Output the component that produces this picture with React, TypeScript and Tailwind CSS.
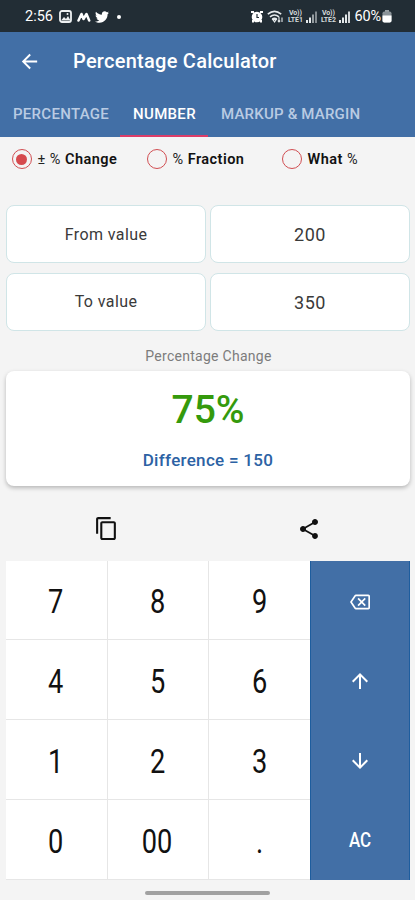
import React from "react";
import {
  MdArrowBack,
  MdArrowDownward,
  MdArrowUpward,
  MdContentCopy,
  MdOutlineBackspace,
  MdShare,
} from "react-icons/md";
import { FaTwitter } from "react-icons/fa";

function Signal({ strong = false }: { strong?: boolean }) {
  return (
    <svg width="12" height="12" viewBox="0 0 12 12" fill="#e4e8ea">
      <rect x="0" y="9" width="2" height="3" />
      <rect x="3" y="6.5" width="2" height="5.5" />
      <rect x="6" y="3.5" width="2" height="8.5" opacity={strong ? 1 : 0.6} />
      <rect x="9" y="0.5" width="2" height="11.5" opacity={strong ? 0.9 : 0.5} />
    </svg>
  );
}

function Volte({ sim }: { sim: number }) {
  return (
    <span className="flex w-[16px] flex-col items-center text-[7px] font-bold leading-[6.5px] tracking-[-0.1px] text-[#d5dadc]">
      <span>Vo))</span>
      <span>LTE{sim}</span>
    </span>
  );
}

function StatusBar() {
  return (
    <div className="flex h-8 shrink-0 items-center bg-[#222d35] pl-[25px] pr-[23px] pt-px text-white">
      <span className="w-[34px] text-[14.5px] leading-8">2:56</span>
      <svg width="13" height="13" viewBox="0 0 13 13">
        <rect x="1" y="1" width="11" height="11" rx="2" fill="none" stroke="#eef1f2" strokeWidth="1.8" />
        <path d="M2 10.5 5 7l2 2 2-3 2.5 4.5z" fill="#eef1f2" />
        <circle cx="8.5" cy="4" r="1" fill="#eef1f2" />
      </svg>
      <svg className="ml-[5px]" width="14" height="10" viewBox="0 0 14 10" fill="none" stroke="#fff" strokeWidth="2.5" strokeLinecap="round" strokeLinejoin="round">
        <path d="M1.5 8.5 4.5 2l2 5L9.5 2l2.7 6.5" />
      </svg>
      <FaTwitter className="ml-[4px]" size={14} />
      <span className="ml-[8px] h-1 w-1 rounded-full bg-white" />
      <div className="ml-auto flex items-center">
        <svg width="12" height="13" viewBox="0 0 12 13">
          <path d="M0 1h3v2H0zM9 1h3v2H9zM1 10h2v2.5H1zM9 10h2v2.5H9z" fill="#fff" />
          <circle cx="6" cy="7" r="5.3" fill="#fff" />
          <path d="M6 4v3.5h2" fill="none" stroke="#222d35" strokeWidth="1.2" />
        </svg>
        <svg className="ml-[4px]" width="17" height="13" viewBox="0 0 17 13" fill="none" stroke="#e6eaec" strokeWidth="1.6">
          <path d="M.8 4.2Q7.5-1.4 14.2 4.2M3 6.8q4.5-3.6 9 0M5.2 9.2q2.3-1.8 4.6 0" />
          <path d="M7.5 12 5.7 9.6h3.6zM12 7v5M10.8 10.7 12 12l1.2-1.3M15 12V7.5" strokeWidth="1.1" />
        </svg>
        <span className="ml-[3px]"><Volte sim={1} /></span>
        <span className="ml-[3px]"><Signal /></span>
        <span className="ml-[2px]"><Volte sim={2} /></span>
        <span className="ml-[3px]"><Signal strong /></span>
        <span className="ml-[3px] text-[14.5px] leading-8 tracking-[-0.1px]">60%</span>
        <svg className="ml-px" width="10" height="13" viewBox="0 0 10 13">
          <rect x="3" y="0" width="4" height="2" fill="#9aa1a5" />
          <rect x="0.5" y="1.5" width="9" height="11" rx="1.8" fill="#8b9398" />
          <path d="M.5 5.5h9v5.2q0 1.8-1.8 1.8H2.3Q.5 12.5 .5 10.7z" fill="#fff" />
        </svg>
      </div>
    </div>
  );
}

function Radio({ symbol, before, label, checked, className }: { symbol: string; before?: boolean; label: string; checked?: boolean; className: string }) {
  const mark = <span className="font-normal text-[#222]">{symbol}</span>;
  return (
    <label className={"flex items-center " + className}>
      <span className="flex h-5 w-5 shrink-0 items-center justify-center rounded-full border-[1.5px] border-[#d14e52]">
        {checked && <span className="h-[11px] w-[11px] rounded-full bg-[#d64a4e]" />}
      </span>
      <span className="ml-[6px] whitespace-pre pt-px text-[14.5px] font-semibold tracking-[0.46px] text-[#111]">
        {before && <>{mark} </>}
        {label}
        {!before && <> {mark}</>}
      </span>
    </label>
  );
}

function Field({ children, value }: { children: React.ReactNode; value?: boolean }) {
  return (
    <div
      className={
        "flex h-[58px] items-center justify-center rounded-[8px] border border-[#d0e5e7] bg-white pt-px text-[#3a3a3a] " +
        (value ? "text-[18px] tracking-[0.5px]" : "text-[16px] tracking-[0.4px]")
      }
    >
      {children}
    </div>
  );
}

const keys = ["7", "8", "9", "4", "5", "6", "1", "2", "3", "0", "00", "."];

export default function App() {
  return (
    <div className="flex h-[900px] w-[415px] flex-col overflow-hidden bg-[#f4f4f4] font-['Roboto',sans-serif]">
      <StatusBar />
      <header className="flex h-[58px] shrink-0 items-center bg-[#426fa6] pl-[18px] text-white">
        <MdArrowBack size={23} />
        <h1 className="ml-[32px] text-[20px] font-medium tracking-[0.26px]">Percentage Calculator</h1>
      </header>
      <nav className="flex h-[47px] shrink-0 bg-[#426fa6] text-[15px] font-medium text-[#b9cbe3]">
        <div className="flex w-[120px] items-center justify-center pl-[2px] pt-[2px] tracking-[0.3px]">PERCENTAGE</div>
        <div className="flex w-[88px] items-center justify-center border-b-2 border-[#dc3c68] pl-px pt-[4px] tracking-[0.3px] text-white">NUMBER</div>
        <div className="flex items-center pl-[13px] pt-[2px] tracking-[0.2px]">MARKUP &amp; MARGIN</div>
      </nav>
      <div className="flex h-[44px] shrink-0 items-center pl-[11.5px]">
        <Radio symbol="± %" before label="Change" checked className="w-[135px]" />
        <Radio symbol="%" before label="Fraction" className="w-[135px]" />
        <Radio symbol="%" label="What" className="" />
      </div>
      <div className="mt-6 grid shrink-0 grid-cols-2 gap-x-1 gap-y-[9.5px] pl-[6px] pr-[5px]">
        <Field>From value</Field>
        <Field value>200</Field>
        <Field>To value</Field>
        <Field value>350</Field>
      </div>
      <div className="flex h-[40px] shrink-0 items-center justify-center pl-[2px] pt-[11px] text-[14px] tracking-[0.28px] text-[#7c7c7c]">
        Percentage Change
      </div>
      <section className="ml-[6px] mr-[5px] flex h-[115px] shrink-0 flex-col items-center rounded-[8px] bg-white shadow-[0_2px_4px_rgba(0,0,0,0.25)]">
        <div className="mt-[14px] text-[39px] font-medium leading-[50px] text-[#359a0c]">75%</div>
        <div className="mt-[14px] text-[17px] font-medium leading-[22px] tracking-[0.3px] text-[#2c62a4]">Difference = 150</div>
      </section>
      <div className="flex h-[75px] shrink-0 items-center pt-[11px] text-[#111]">
        <div className="flex w-[213px] justify-center"><MdContentCopy size={25} /></div>
        <div className="flex w-[192px] justify-center"><MdShare size={24} /></div>
      </div>
      <div className="ml-[6px] mr-[5px] flex h-[319px] shrink-0">
        <div className="grid w-[304px] grid-cols-3 grid-rows-4 gap-px bg-[#e6e6e6] pb-px">
          {keys.map((k) => (
            <button key={k} className="flex items-center justify-center bg-white pr-px pt-[4px] text-[34px] text-[#111]">
              <span className="scale-x-[0.8] font-normal">{k}</span>
            </button>
          ))}
        </div>
        <div className="grid flex-1 grid-rows-4 border-x border-[#1d5d9e] bg-[#426fa6] pt-[2px] text-white">
          <div className="flex items-center justify-center"><MdOutlineBackspace size={20} /></div>
          <div className="flex items-center justify-center"><MdArrowUpward size={24} /></div>
          <div className="flex items-center justify-center"><MdArrowDownward size={24} /></div>
          <div className="flex items-center justify-center pt-px text-[20px] font-medium"><span className="scale-x-[0.85]">AC</span></div>
        </div>
      </div>
      <div className="mx-auto mt-[11px] h-1 w-[125px] shrink-0 rounded-full bg-[#a1a1a1]" />
    </div>
  );
}
